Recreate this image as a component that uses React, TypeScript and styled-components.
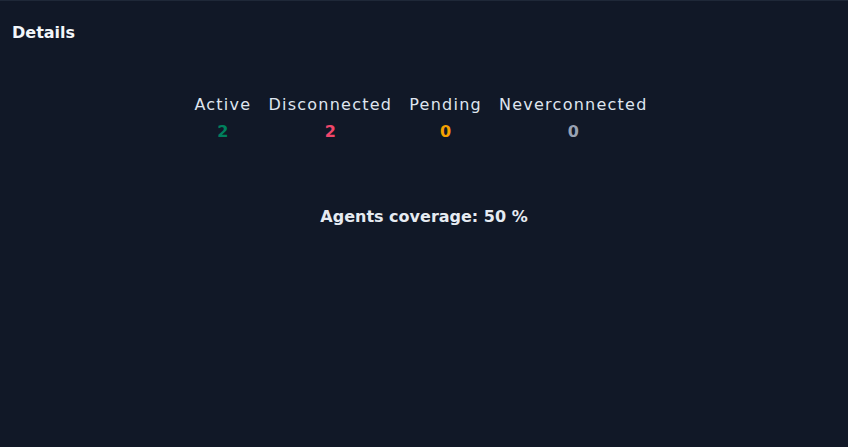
import React from "react";
import styled, { createGlobalStyle } from "styled-components";

const GlobalStyle = createGlobalStyle`
  html, body {
    margin: 0;
    padding: 0;
    background: #111827;
  }
  body {
    font-family: "DejaVu Sans", "Noto Sans", sans-serif;
  }
`;

const Panel = styled.div`
  box-sizing: border-box;
  width: 848px;
  height: 447px;
  background: #111827;
  border-top: 1px solid #1f2838;
  color: #dfe5ef;
  padding: 20px 12px 0;
`;

const Title = styled.h2`
  margin: 0;
  font-size: 16px;
  font-weight: 700;
  line-height: 24px;
  color: #f3f6fa;
`;

const StatsRow = styled.div`
  display: flex;
  justify-content: center;
  gap: 17px;
  margin-top: 48px;
  padding-right: 6px;
`;

const Stat = styled.div`
  display: flex;
  flex-direction: column;
  align-items: center;
`;

const StatLabel = styled.span`
  font-size: 16px;
  line-height: 24px;
  letter-spacing: 1.25px;
  color: #dfe5ef;
`;

const StatValue = styled.span<{ $color: string }>`
  font-size: 16px;
  font-weight: 700;
  line-height: 30px;
  color: ${(p) => p.$color};
`;

const Coverage = styled.div`
  margin-top: 58px;
  text-align: center;
  font-size: 16px;
  font-weight: 700;
  line-height: 24px;
  color: #e6ebf2;
`;

const stats = [
  { label: "Active", value: 2, color: "#00805d" },
  { label: "Disconnected", value: 2, color: "#f0466a" },
  { label: "Pending", value: 0, color: "#f5a100" },
  { label: "Neverconnected", value: 0, color: "#98a2b3" },
];

export default function App() {
  return (
    <>
      <GlobalStyle />
      <Panel>
        <Title>Details</Title>
        <StatsRow>
          {stats.map((s) => (
            <Stat key={s.label}>
              <StatLabel>{s.label}</StatLabel>
              <StatValue $color={s.color}>{s.value}</StatValue>
            </Stat>
          ))}
        </StatsRow>
        <Coverage>Agents coverage: 50 %</Coverage>
      </Panel>
    </>
  );
}
